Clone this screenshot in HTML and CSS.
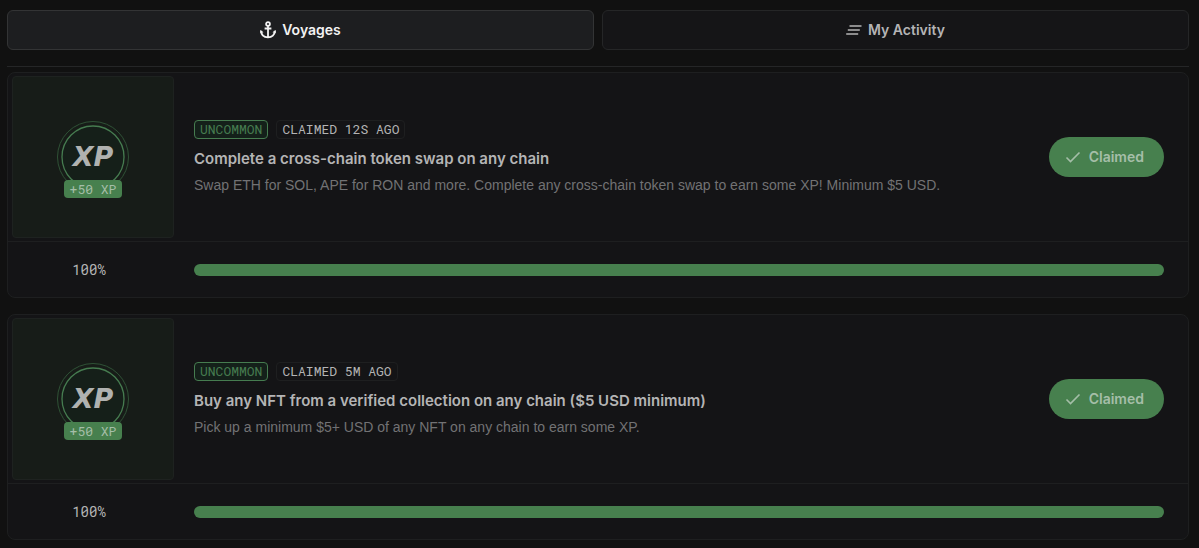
FILE: index.html
```html
<!DOCTYPE html>
<html lang="en">
<head>
<meta charset="utf-8">
<meta name="viewport" content="width=device-width, initial-scale=1">
<title>Voyages</title>
<link rel="stylesheet" href="styles.css">
</head>
<body>
<main class="page">
  <nav class="tabs" aria-label="Sections">
    <button class="tab tab-active" type="button">
      <svg class="tab-icon" viewBox="0 0 16 18" fill="none" stroke="currentColor" stroke-width="1.8" aria-hidden="true"><circle cx="8" cy="3" r="1.9"/><path d="M8 5v11M4.600 7.500h6.800M1.200 9.800C1.200 14 4 16.300 8 16.300s6.800-2.300 6.800-6.500"/><path d="M.2 12.200V9l3.300 2.200zM15.800 12.200V9l-3.300 2.200z" fill="currentColor" stroke="none"/></svg>
      <span>Voyages</span>
    </button>
    <button class="tab" type="button">
      <svg class="tab-icon" viewBox="0 0 16 18" fill="none" stroke="currentColor" stroke-width="1.700" aria-hidden="true"><path d="M3.500 5h12M1.800 9h12M.2 13h12"/></svg>
      <span>My Activity</span>
    </button>
  </nav>
  <div class="list">
    <article class="card">
      <div class="card-main">
        <div class="thumb">
          <div class="medal">
            <svg class="rings" viewBox="0 0 74 74" fill="none" aria-hidden="true"><circle cx="37" cy="37" r="35.500" stroke="#2f5236"/><circle cx="37" cy="37" r="31" fill="#151f19" stroke="#467c50" stroke-width="1.300"/></svg>
            <span class="logo">XP</span>
            <span class="reward">+50 XP</span>
          </div>
        </div>
        <div class="info">
          <div class="tags"><span class="tag tag-rarity">UNCOMMON</span><span class="tag">CLAIMED 12S AGO</span></div>
          <h2 class="title">Complete a cross-chain token swap on any chain</h2>
          <p class="desc">Swap ETH for SOL, APE for RON and more. Complete any cross-chain token swap to earn some XP! Minimum $5 USD.</p>
        </div>
        <button class="claimed" type="button"><svg class="check" viewBox="0 0 16 16" fill="none" stroke="currentColor" stroke-width="1.600" aria-hidden="true"><path d="M1.500 8.500l4 4L14.500 3.500"/></svg>Claimed</button>
      </div>
      <div class="card-foot">
        <label class="percent" for="p1">100%</label>
        <progress class="bar" id="p1" max="100" value="100"></progress>
      </div>
    </article>
    <article class="card">
      <div class="card-main">
        <div class="thumb">
          <div class="medal">
            <svg class="rings" viewBox="0 0 74 74" fill="none" aria-hidden="true"><circle cx="37" cy="37" r="35.500" stroke="#2f5236"/><circle cx="37" cy="37" r="31" fill="#151f19" stroke="#467c50" stroke-width="1.300"/></svg>
            <span class="logo">XP</span>
            <span class="reward">+50 XP</span>
          </div>
        </div>
        <div class="info">
          <div class="tags"><span class="tag tag-rarity">UNCOMMON</span><span class="tag">CLAIMED 5M AGO</span></div>
          <h2 class="title">Buy any NFT from a verified collection on any chain ($5 USD minimum)</h2>
          <p class="desc">Pick up a minimum $5+ USD of any NFT on any chain to earn some XP.</p>
        </div>
        <button class="claimed" type="button"><svg class="check" viewBox="0 0 16 16" fill="none" stroke="currentColor" stroke-width="1.600" aria-hidden="true"><path d="M1.500 8.500l4 4L14.500 3.500"/></svg>Claimed</button>
      </div>
      <div class="card-foot">
        <label class="percent" for="p2">100%</label>
        <progress class="bar" id="p2" max="100" value="100"></progress>
      </div>
    </article>
  </div>
</main>
</body>
</html>
```

FILE: styles.css
```css
* { box-sizing: border-box; }

body {
  margin: 0;
  background: #111111;
  color: #b4b4b5;
  font-family: Inter, "Liberation Sans", sans-serif;
  font-size: 14px;
}

.page { padding: 10px 10px 9px 7px; }

.tabs {
  display: grid;
  grid-template-columns: 1fr 1fr;
  gap: 8px;
  padding-bottom: 16px;
  border-bottom: 1px solid #252627;
}

.tab {
  display: flex;
  align-items: center;
  justify-content: center;
  gap: 6px;
  height: 40px;
  padding: 0;
  border: 1px solid #252627;
  border-radius: 6px;
  background: #151517;
  color: #b4b4b5;
  font: 600 14px/20px Inter, "Liberation Sans", sans-serif;
}

.tab-active {
  border-color: #333435;
  background: #1d1e20;
  color: #f2f2f2;
}

.tab-icon { width: 16px; height: 18px; }

.list {
  display: grid;
  gap: 16px;
  padding-top: 5px;
}

.card {
  border: 1px solid #1e1f20;
  border-radius: 8px;
  background: #141416;
}

.card-main {
  display: flex;
  align-items: center;
  gap: 20px;
  padding: 3px 24px 3px 4px;
  border-bottom: 1px solid #1e1f20;
}

.thumb {
  display: grid;
  flex: none;
  place-items: center;
  width: 162px;
  height: 162px;
  border: 1px solid #1e2220;
  border-radius: 4px;
  background: #171c18;
}

.medal {
  display: grid;
  place-items: center;
}

.medal > * { grid-area: 1 / 1; }

.rings { width: 74px; height: 74px; }

.logo {
  color: #b0b2b0;
  font: italic 700 27px/28px "DejaVu Sans", sans-serif;
}

.reward {
  align-self: end;
  margin-bottom: -4px;
  padding: 0 6px;
  border-radius: 4px;
  background: #47804e;
  color: #a5bea8;
  font: 13px/18px "Roboto Mono", "DejaVu Sans Mono", monospace;
}

.info {
  flex: 1;
  min-width: 0;
}

.tags {
  display: flex;
  gap: 8px;
}

.tag {
  padding: 0 5px;
  border: 1px solid #1e1f20;
  border-radius: 4px;
  font: 13px/17px "Roboto Mono", "DejaVu Sans Mono", monospace;
}

.tag-rarity {
  border-color: #467c50;
  background: #14201a;
  color: #467c50;
}

.title {
  margin: 8px 0 4px;
  font-size: 15px;
  font-weight: 600;
  line-height: 24px;
}

.desc {
  margin: 0;
  color: #727274;
  font-family: "Liberation Sans", Arial, sans-serif;
  font-size: 14px;
  line-height: 20px;
}

.claimed {
  display: flex;
  flex: none;
  align-items: center;
  gap: 8px;
  height: 40px;
  padding: 0 20px 0 16px;
  border: 0;
  border-radius: 20px;
  background: #47804e;
  color: #a5bea8;
  font: 600 14px/20px Inter, "Liberation Sans", sans-serif;
}

.check { width: 16px; height: 16px; }

.card-foot {
  display: flex;
  align-items: center;
  gap: 20px;
  height: 55px;
  padding: 0 24px 0 4px;
}

.percent {
  flex: none;
  width: 162px;
  padding-right: 8px;
  font: 14px/20px "Roboto Mono", "DejaVu Sans Mono", monospace;
  text-align: center;
}

.bar {
  flex: 1;
  min-width: 0;
  height: 12px;
  border: 0;
  border-radius: 6px;
  overflow: hidden;
  appearance: none;
  background: #1e1f20;
}

.bar::-webkit-progress-bar { background: #1e1f20; }
.bar::-webkit-progress-value { background: #47804e; }
```
